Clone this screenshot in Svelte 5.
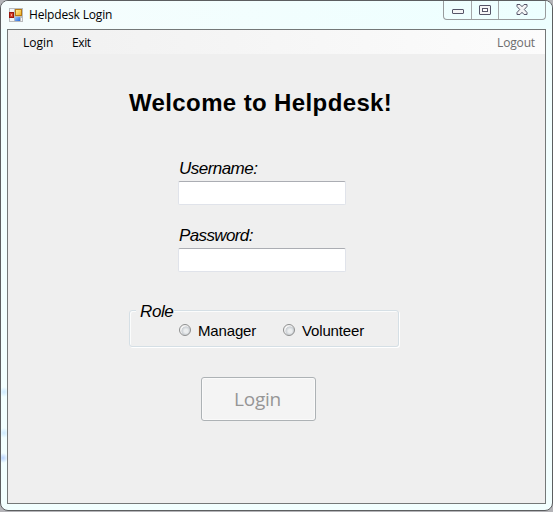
<script>
  const fields = ['Username:', 'Password:'];
  const roles = ['Manager', 'Volunteer'];
</script>

<div class="desktop">
  <div class="window">
    <header class="titlebar">
      <svg class="app" width="14" height="14" viewBox="0 0 14 14">
        <defs>
          <linearGradient id="gold" x2="1" y2="1"><stop stop-color="#fff0a0" /><stop offset="1" stop-color="#f0ac18" /></linearGradient>
          <linearGradient id="blue" x2="1" y2="1"><stop stop-color="#9cc8ff" /><stop offset="1" stop-color="#2868d8" /></linearGradient>
        </defs>
        <rect width="14" height="14" fill="#b9bbbd" />
        <path d="M1 1h4v3H1zM1 10h4v3H1zM12 10h1v3h-1z" fill="#f3f4f5" />
        <rect x=".5" y="4.5" width="4" height="5" fill="#d23b28" stroke="#98180f" />
        <rect x="2" y="6" width="1" height="2" fill="#f5a08c" />
        <rect x="6.5" y="1.5" width="6" height="6" fill="url(#gold)" stroke="#b77a13" />
        <rect x="6" y="9" width="5" height="4" fill="url(#blue)" />
      </svg>
      <span class="caption">Helpdesk Login</span>
      <div class="controls">
        <i><svg width="12" height="6" viewBox="0 0 12 6"><rect x=".5" y=".5" width="11" height="4" rx=".5" fill="#f4f5f6" stroke="#555568" /></svg></i>
        <i><svg width="12" height="10" viewBox="0 0 12 10"><rect x=".5" y=".5" width="11" height="9" rx=".5" fill="#f4f5f6" stroke="#555568" /><rect x="3.5" y="3.5" width="5" height="3" fill="#fff" stroke="#555568" /></svg></i>
        <i><svg width="12" height="11" viewBox="0 0 12 11"><path d="M1 .5h3L6 2.700 8 .5h3v2L8.300 5.500 11 8.500v2H8L6 8.300 4 10.500H1v-2l2.700-3L1 2.500z" fill="#f4f5f6" stroke="#555568" /></svg></i>
      </div>
    </header>

    <main class="client">
      <nav>
        <span class="login">Login</span>
        <span class="exit">Exit</span>
        <span class="logout">Logout</span>
      </nav>
      <h1>Welcome to Helpdesk!</h1>
      <form>
        {#each fields as field, n}
          <label class="field">
            <span class:pass={n === 1}>{field}</span>
            <input type="text" />
          </label>
        {/each}
        <fieldset>
          <legend>Role</legend>
          <div class="options">
            {#each roles as role}
              <label class={role.toLowerCase()}><input type="radio" name="role" /><span>{role}</span></label>
            {/each}
          </div>
        </fieldset>
        <button type="button" disabled><span>Login</span></button>
      </form>
    </main>
  </div>
</div>

<style>
  :global(body) { margin: 0; }
  .desktop {
    width: 553px;
    height: 512px;
    background: #b4b4b8;
    font-family: "Open Sans", "Noto Sans", sans-serif;
    color: #000;
    overflow: hidden;
  }
  .window {
    box-sizing: border-box;
    width: 553px;
    height: 511px;
    border: 1px solid #5c5e60;
    border-radius: 8px;
    background:
      radial-gradient(ellipse 5px 5px at 3px 391px, #cdeaff, transparent),
      radial-gradient(ellipse 5px 5px at 3px 432px, #cdeaff, transparent),
      radial-gradient(ellipse 5px 5px at 2px 457px, #b9d4ff, transparent),
      #f2ffff;
    overflow: hidden;
  }
  .titlebar {
    display: flex;
    height: 28px;
    padding-left: 8px;
    background: linear-gradient(90deg, #f6fdfd, #edffff);
  }
  .app { margin-top: 7px; flex: none; }
  .caption {
    margin-left: 6px;
    font-size: 12px;
    line-height: 28px;
    letter-spacing: -0.17px;
    white-space: nowrap;
  }
  .controls {
    display: flex;
    box-sizing: border-box;
    width: 103px;
    height: 19px;
    margin-left: auto;
    margin-right: 6px;
    border: 1px solid #989b9d;
    border-top: 0;
    border-radius: 0 0 4px 4px;
  }
  .controls i {
    display: flex;
    box-sizing: border-box;
    align-items: center;
    justify-content: center;
    width: 27px;
    padding-bottom: 1px;
    border-right: 1px solid #a4a7a9;
  }
  .controls i:first-child { padding-top: 4px; padding-bottom: 0; width: 28px; }
  .controls i:last-child { flex: 1; border: 0; }
  .client {
    box-sizing: border-box;
    width: 539px;
    height: 475px;
    margin-left: 6px;
    border: 1px solid #747878;
    background: #efefef;
  }
  nav {
    display: flex;
    height: 24px;
    padding: 0 10px 0 15px;
    background: linear-gradient(90deg, #f0f0f0, #fcfcfc);
    font-size: 12px;
    line-height: 25px;
  }
  .login { width: 49px; }
  .exit { letter-spacing: -0.4px; }
  .logout { margin-left: auto; color: #6d6d6d; letter-spacing: -0.15px; }
  h1 {
    margin: 35px 0 0 121px;
    font: bold 24px/28px "Liberation Sans", Arial, sans-serif;
    letter-spacing: 0.38px;
    white-space: nowrap;
  }
  form {
    display: flex;
    flex-direction: column;
    align-items: flex-start;
    padding: 41px 0 0 121px;
    font-family: "Liberation Sans", Arial, sans-serif;
  }
  .field { display: block; height: 67px; margin-left: 49px; }
  .field span {
    display: block;
    height: 23px;
    margin-left: 1px;
    font-size: 17px;
    font-style: italic;
    line-height: 22px;
    letter-spacing: -0.53px;
  }
  .field .pass { letter-spacing: -0.62px; }
  .field input {
    display: block;
    box-sizing: border-box;
    width: 168px;
    height: 24px;
    margin: 0;
    padding: 2px;
    border: 1px solid #e0e3ea;
    border-top-color: #abadb3;
    border-radius: 2px;
    background: #fff;
    outline: none;
  }
  fieldset {
    box-sizing: border-box;
    width: 270px;
    height: 48px;
    min-width: 0;
    margin: 7px 0 0;
    padding: 0;
    border: 1px solid #d5dfe5;
    border-radius: 3px;
    box-shadow: inset 1px 1px #fbfcfc, 1px 1px #fff;
  }
  legend {
    margin-left: 6px;
    padding: 4px 1px 0 4px;
    background: #efefef;
    font-size: 17px;
    font-style: italic;
    line-height: 18px;
    letter-spacing: -0.4px;
  }
  .options { display: flex; margin-top: -1px; }
  .options label { display: flex; align-items: center; height: 20px; font-size: 15px; letter-spacing: -0.15px; }
  .options .manager { width: 104px; margin-left: 49px; }
  .options input {
    appearance: none;
    width: 12px;
    height: 12px;
    margin: -1px 7px 0 0;
    border: 1px solid #8e8f8f;
    border-radius: 50%;
    background: radial-gradient(circle at 60% 60%, #eceeef 0 20%, #c9ced3 50%, #f4f4f4 58%);
  }
  button {
    box-sizing: border-box;
    width: 115px;
    height: 44px;
    margin: 30px 0 0 72px;
    padding: 0 2px 0 0;
    border: 1px solid #adb2b5;
    border-radius: 3px;
    background: #f4f4f4;
    box-shadow: inset 0 0 0 1px #fafafa;
    color: #969696;
    font: 19px/42px "Open Sans", "Noto Sans", sans-serif;
    letter-spacing: -0.2px;
  }
</style>
